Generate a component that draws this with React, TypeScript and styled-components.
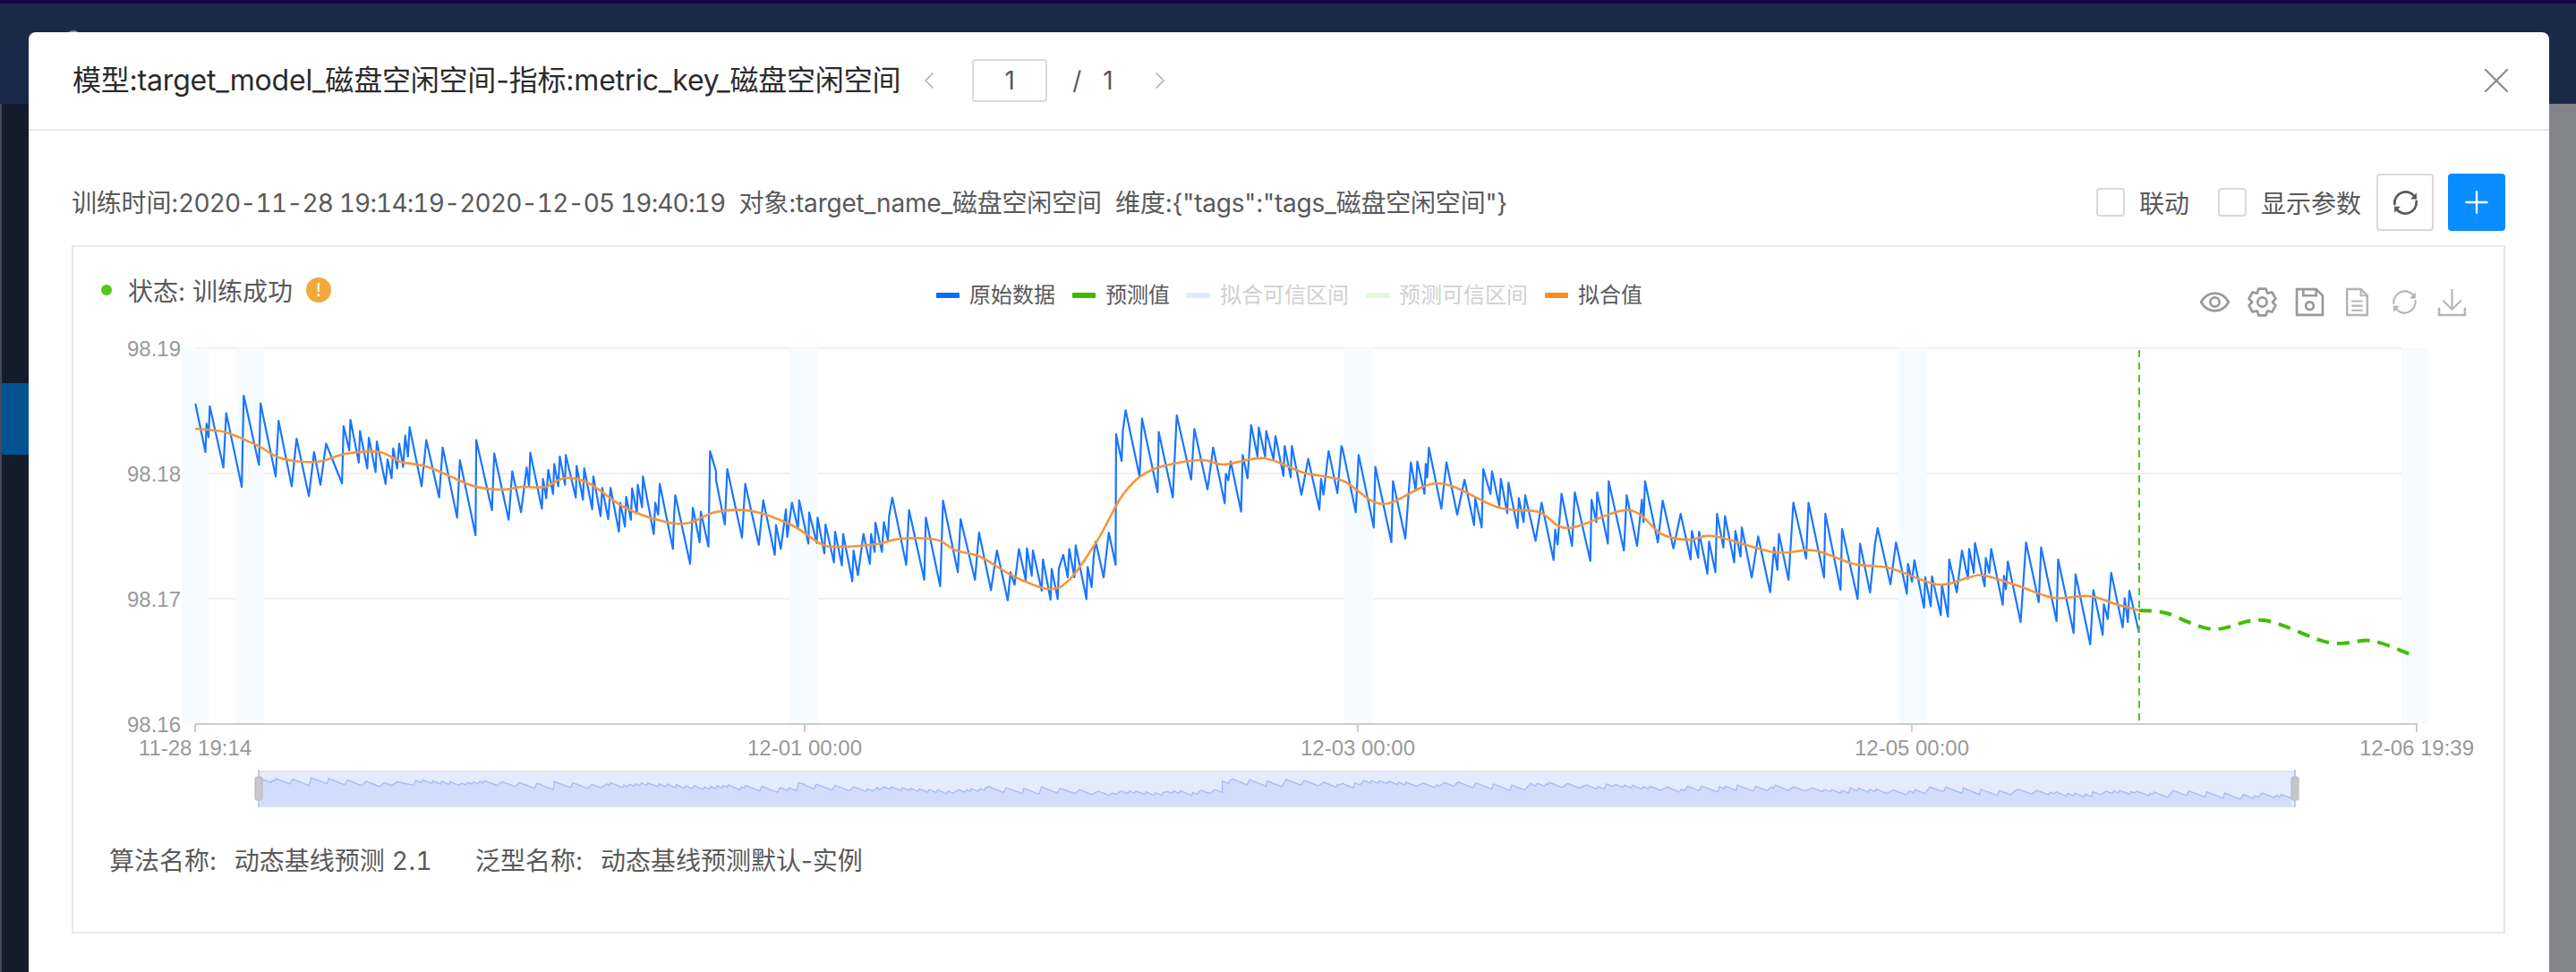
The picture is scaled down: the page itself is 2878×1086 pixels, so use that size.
import React from 'react';
import styled, { createGlobalStyle } from 'styled-components';
import { ChevronLeft, ChevronRight, Plus, X } from 'lucide-react';

const GlobalStyle = createGlobalStyle`
  html, body {
    margin: 0;
    padding: 0;
    width: 2878px;
    height: 1086px;
    overflow: hidden;
    background: #848589;
  }
  * { box-sizing: border-box; }
  body {
    font-family: Inter, "Noto Sans CJK SC", "Noto Sans", sans-serif;
  }
`;

type Pt = [number, number];

// vertices read off the reference crops, each crop has its own scale
const fromCrop = (ox: number, sx: number, flat: number[]): Pt[] => {
  const out: Pt[] = [];
  for (let i = 0; i < flat.length; i += 2) {
    out.push([ox + flat[i] / sx, 370 + flat[i + 1] / 3]);
  }
  return out;
};

const rawSeries: Pt[] = [
  ...fromCrop(100, 2.24, [
    265,243,290,405,293,310,298,355,301,252,335,457,342,275,381,522,386,216,424,448,428,242,466,487,473,300,506,520,
    518,360,549,553,562,405,578,515,592,377,632,510,636,318,650,400,653,297,674,440,677,335,695,460,699,357,716,472,
    719,370,741,512,746,430,756,493,760,393,770,460,775,377,785,455,790,350,797,420,801,322,831,520,843,365,875,557,
    884,390,920,625,927,432,966,684,968,365,1007,600,1013,410,1049,632,1058,470,1080,607,1094,457,1100,520,1103,407,
    1132,595,1135,495,1143,560,1148,465,1160,545,1163,445,1173,520,1177,420,1190,515,1192,415,1217,558,1219,452,
    1235,565,1238,460,1258,597,1261,487,1279,620,1283,525,1298,630,1304,525,1325,672,1328,575,1340,655,1343,555,
    1355,632,1358,527,1370,610,1372,515,1383,590,1385,487,1412,680,1416,575,1423,615,1427,512,1460,730,1463,620,
    1466,550,1503,780,1510,592,1527,708,1530,605,1549,722,1553,402,1568,470,
  ]),
  ...fromCrop(800, 2.24, [
    0,500,22,648,28,462,65,692,73,512,107,716,118,567,147,750,150,650,162,730,175,597,178,690,190,575,205,660,208,567,
    231,712,233,608,252,710,254,625,271,745,274,648,295,775,298,672,315,785,318,680,341,838,344,735,355,818,369,680,
    385,780,388,680,397,740,399,642,415,740,420,640,430,700,433,620,441,558,476,783,483,600,521,833,525,625,561,855,
    568,568,605,808,612,630,648,833,658,675,688,868,703,735,730,902,737,808,747,850,758,730,775,835,778,728,790,820,
    793,735,815,870,818,765,837,900,840,797,855,898,858,795,869,750,880,825,884,730,897,825,900,718,927,898,930,790,
    940,858,945,755,950,705,970,825,983,675,1000,783,1001,345,1015,435,1018,335,1025,265,1060,488,1066,293,1105,540,
    1108,338,1143,557,1153,282,1189,497,1197,328,1230,530,1244,390,1273,577,1276,478,1282,500,1288,437,1314,605,
    1318,415,1330,493,1339,315,1355,420,1358,323,1374,420,1377,335,1395,430,1400,352,1420,485,1423,385,1438,490,
    1441,385,1465,548,1482,428,1510,598,1514,495,1520,548,1533,402,1555,543,1565,385,
  ]),
  ...fromCrop(1500, 2.24, [
    0,395,33,607,40,415,78,658,82,455,122,707,126,503,157,695,171,440,183,535,187,437,205,545,208,445,212,490,216,390,
    247,595,260,440,287,615,305,498,329,650,332,560,348,658,352,462,370,545,374,470,392,585,396,495,412,610,415,508,
    438,660,441,560,453,640,457,550,483,703,498,575,528,767,532,665,538,715,548,545,574,720,581,540,620,770,623,565,
    635,640,637,540,664,712,666,503,704,735,711,550,737,720,749,565,753,640,757,503,789,708,801,568,828,728,846,612,
    871,765,874,670,890,760,892,672,913,813,917,705,933,808,937,612,953,725,957,620,980,775,983,670,996,755,999,658,
    1024,826,1040,688,1070,875,1080,725,1088,800,1092,680,1116,833,1128,575,1160,762,1166,575,1205,826,1208,612,
    1246,867,1250,663,1289,898,1295,712,1320,876,1332,718,1339,660,1371,848,1385,708,1412,880,1415,780,1425,840,
    1431,768,1455,927,1458,825,1472,922,1475,822,1497,952,1500,850,1515,957,1518,765,1537,875,1550,735,1565,830,
  ]),
  ...fromCrop(2200, 2.313, [
    0,730,12,810,15,710,40,855,43,760,52,810,57,730,87,917,90,820,95,865,100,772,133,975,147,708,180,908,186,725,
    226,972,230,765,270,1012,275,815,313,1050,321,868,345,1018,348,915,358,965,367,810,397,993,402,895,410,975,
    414,870,439,1010,
  ]),
];

const fitted: Pt[] = [
  [218,479],[252,483],[288,498],[314,512],[354,516],[386,507],[424,505],[448,516],[479,522],[529,543],[562,547],
  [582,544],[609,544],[631,534],[658,540],[698,567],[743,583],[770,584],[800,572],[840,571],[885,587],[916,607],
  [934,611],[979,608],[1005,602],[1046,603],[1068,615],[1095,622],[1139,647],[1184,656],[1224,607],[1255,552],
  [1287,525],[1340,514],[1367,519],[1412,512],[1456,528],[1500,537],[1545,563],[1607,540],[1674,567],[1719,572],
  [1752,590],[1819,570],[1857,597],[1888,603],[1915,599],[1982,617],[2027,615],[2071,630],[2112,635],[2165,653],
  [2200,645],[2217,643],[2256,655],[2295,668],[2334,666],[2364,675],[2390,682],
];

const forecast: Pt[] = [
  [2390,682],[2420,685],[2472,703],[2529,693],[2602,718],[2650,716],[2697,733],
];

const toPolyline = (pts: Pt[]) => pts.map(([x, y]) => `${x.toFixed(1)},${y.toFixed(1)}`).join(' ');

const toSmoothPath = (pts: Pt[]) => {
  let d = `M${pts[0][0]} ${pts[0][1]}`;
  for (let i = 0; i < pts.length - 1; i++) {
    const p0 = pts[Math.max(i - 1, 0)];
    const p1 = pts[i];
    const p2 = pts[i + 1];
    const p3 = pts[Math.min(i + 2, pts.length - 1)];
    const c1x = p1[0] + (p2[0] - p0[0]) / 6;
    const c1y = p1[1] + (p2[1] - p0[1]) / 6;
    const c2x = p2[0] - (p3[0] - p1[0]) / 6;
    const c2y = p2[1] - (p3[1] - p1[1]) / 6;
    d += ` C${c1x.toFixed(1)} ${c1y.toFixed(1)} ${c2x.toFixed(1)} ${c2y.toFixed(1)} ${p2[0]} ${p2[1]}`;
  }
  return d;
};

// same data squeezed into the data zoom slider
const miniSeries: Pt[] = rawSeries.map(([x, y]) => [
  291 + ((x - 218) / (2390 - 218)) * (2560 - 291),
  869 + (y - 442) * 0.086,
]);
const miniArea = `291,901 ${toPolyline(miniSeries)} 2560,901`;

const gearPath = (() => {
  const cx = 16;
  const cy = 16;
  const teeth = 6;
  const pts: string[] = [];
  for (let i = 0; i < teeth; i++) {
    const a = (i / teeth) * Math.PI * 2 - Math.PI / 2;
    const w = 0.27;
    const seq: [number, number][] = [
      [11.2, a - 0.52 + 0.02],
      [15, a - w],
      [15, a + w],
      [11.2, a + 0.5],
    ];
    seq.forEach(([r, t]) => {
      pts.push(`${(cx + r * Math.cos(t)).toFixed(2)} ${(cy + r * Math.sin(t)).toFixed(2)}`);
    });
  }
  return `M${pts.join(' L')} Z`;
})();

const bands: [number, number][] = [
  [203, 233],
  [264, 295],
  [882, 914],
  [1502, 1534],
  [2121, 2153],
  [2683, 2714],
];

const yTicks = [
  { label: '98.19', y: 389 },
  { label: '98.18', y: 529 },
  { label: '98.17', y: 669 },
  { label: '98.16', y: 809 },
];

const xTicks = [
  { label: '11-28 19:14', x: 218 },
  { label: '12-01 00:00', x: 899 },
  { label: '12-03 00:00', x: 1517 },
  { label: '12-05 00:00', x: 2136 },
  { label: '12-06 19:39', x: 2700 },
];

const legend = [
  { label: '原始数据', color: '#0a6cff', off: false },
  { label: '预测值', color: '#3cba00', off: false },
  { label: '拟合可信区间', color: '#dfeaff', off: true },
  { label: '预测可信区间', color: '#e5f6dc', off: true },
  { label: '拟合值', color: '#ff8c1a', off: false },
];

const Page = styled.div`
  position: relative;
  width: 2878px;
  height: 1086px;
  overflow: hidden;
  display: flex;
  flex-direction: column;
`;

const TopBar = styled.header`
  position: relative;
  height: 116px;
  flex: none;
  background: #1a2948;
  border-top: 4px solid #14084a;
`;

const Avatar = styled.span`
  position: absolute;
  left: 74px;
  top: 30px;
  width: 16px;
  height: 16px;
  border-radius: 50%;
  background: #8a8f9c;
`;

const Under = styled.div`
  flex: 1;
  display: flex;
`;

const Sidebar = styled.nav`
  width: 32px;
  flex: none;
  background: #141b2b;
  border-left: 2px solid #42485a;
  padding-top: 312px;
`;

const ActiveItem = styled.div`
  height: 80px;
  background: #04528f;
`;

const Main = styled.main`
  flex: 1;
  background: #848589;
`;

const Modal = styled.section`
  position: absolute;
  left: 32px;
  top: 36px;
  width: 2816px;
  height: 1050px;
  background: #fff;
  border-radius: 8px 8px 0 0;
  display: flex;
  flex-direction: column;
`;

const ModalHeader = styled.div`
  height: 110px;
  flex: none;
  display: flex;
  align-items: center;
  padding: 0 35px 0 49px;
  border-bottom: 2px solid #e8e8e8;
`;

const Title = styled.h2`
  margin: 0;
  font-size: 32px;
  line-height: 44px;
  font-weight: 400;
  letter-spacing: -0.2px;
  color: #2b2b2b;
  white-space: nowrap;
`;

const Pager = styled.div`
  display: flex;
  align-items: center;
  margin-left: 16px;
  color: #595959;
  font-size: 28px;
`;

const PageArrow = styled.span`
  display: flex;
  color: #b3b3b3;
`;

const PageInput = styled.div`
  width: 84px;
  height: 48px;
  margin: 0 28px 0 32px;
  border: 2px solid #d9d9d9;
  border-radius: 4px;
  display: flex;
  align-items: center;
  justify-content: center;
  color: #595959;
`;

const PageTotal = styled.span`
  display: flex;
  gap: 24px;
  margin-right: 36px;
`;

const CloseButton = styled.button`
  margin-left: auto;
  padding: 0;
  border: 0;
  background: none;
  color: #8c8c8c;
  display: flex;
`;

const ModalBody = styled.div`
  flex: 1;
  padding: 48px 49px 0 48px;
  display: flex;
  flex-direction: column;
`;

const InfoRow = styled.div`
  height: 64px;
  flex: none;
  margin-bottom: 16px;
  display: flex;
  align-items: center;
  justify-content: space-between;
`;

const InfoText = styled.div`
  font-size: 28px;
  line-height: 40px;
  padding-top: 2px;
  letter-spacing: -0.2px;
  color: #595959;
  white-space: pre;
`;

const Numeric = styled.span`
  font-variant-numeric: tabular-nums;
  letter-spacing: -0.85px;
`;

const Controls = styled.div`
  display: flex;
  align-items: center;
  gap: 16px;
`;

const CheckItem = styled.label<{ $last?: boolean }>`
  display: flex;
  align-items: center;
  gap: 16px;
  margin-right: ${p => (p.$last ? 1 : 16)}px;
  font-size: 28px;
  color: #595959;
`;

const CheckBox = styled.span`
  width: 32px;
  height: 32px;
  border: 2px solid #d9d9d9;
  border-radius: 4px;
  background: #fff;
`;

const IconButton = styled.button<{ $primary?: boolean }>`
  width: 64px;
  height: 64px;
  padding: 0;
  border-radius: 4px;
  display: flex;
  align-items: center;
  justify-content: center;
  border: 2px solid ${p => (p.$primary ? '#0a8dff' : '#d9d9d9')};
  background: ${p => (p.$primary ? '#0a8dff' : '#fff')};
  color: ${p => (p.$primary ? '#fff' : '#595959')};
`;

const Card = styled.div`
  height: 769px;
  flex: none;
  border: 2px solid #e8e8e8;
  display: flex;
  flex-direction: column;
`;

const CardHead = styled.div`
  height: 96px;
  flex: none;
  display: grid;
  grid-template-columns: 964px 1fr auto;
`;

const Status = styled.div`
  display: flex;
  align-items: center;
  height: 32px;
  margin-top: 32px;
  padding-left: 31px;
  font-size: 28px;
  color: #595959;
`;

const StatusDot = styled.span`
  width: 12px;
  height: 12px;
  border-radius: 50%;
  background: #52c41a;
  margin-right: 18px;
`;

const WarnBadge = styled.span`
  width: 28px;
  height: 28px;
  margin-left: 15px;
  border-radius: 50%;
  background: #f0a93b;
  color: #fff;
  font-size: 20px;
  line-height: 28px;
  text-align: center;
`;

const Legend = styled.div`
  display: flex;
  align-items: center;
  gap: 19px;
  height: 34px;
  margin-top: 37px;
`;

const LegendItem = styled.span<{ $off?: boolean }>`
  display: flex;
  align-items: center;
  gap: 11px;
  font-size: 24px;
  line-height: 34px;
  color: ${p => (p.$off ? '#d0d0d0' : '#595959')};
`;

const LegendMark = styled.i<{ $color: string }>`
  width: 26px;
  height: 6px;
  border-radius: 1px;
  background: ${p => p.$color};
`;

const Toolbox = styled.div`
  display: flex;
  align-items: center;
  gap: 20px;
  margin-top: 44px;
  height: 34px;
  padding-right: 41px;
`;

const ToolIcon = styled.svg<{ $tone?: 'dark' | 'light' }>`
  width: 33px;
  height: 33px;
  fill: none;
  stroke: ${p => (p.$tone === 'dark' ? '#595959' : p.$tone === 'light' ? '#b4b4b4' : '#999')};
  stroke-width: ${p => (p.$tone === 'light' ? 2 : 2.6)};
`;

const ChartSvg = styled.svg`
  display: block;
  width: 2715px;
  height: 533px;
  flex: none;
`;

const AxisLabel = styled.text`
  font-family: "Liberation Sans", Arial, sans-serif;
  font-size: 24px;
  fill: #999;
`;

const Footer = styled.div`
  margin-top: 37px;
  padding-left: 40px;
  display: flex;
  gap: 48px;
  font-size: 28px;
  line-height: 40px;
  color: #595959;
  white-space: pre;
`;

const FooterLabel = styled.span`
  margin-right: 4px;
`;

const FooterNumber = styled(Numeric)`
  letter-spacing: 0.5px;
`;

const RefreshGlyph: React.FC<{ light?: boolean }> = ({ light }) => (
  <>
    <path d="M4.2 17.5A12 12 0 0 1 26.6 10.4" strokeLinecap="round" />
    <path d="M27.8 14.5A12 12 0 0 1 5.4 21.6" strokeLinecap="round" />
    <path d="M28 5.2V12H21.4Z" fill={light ? '#b4b4b4' : '#595959'} stroke="none" />
    <path d="M4 26.8V20H10.6Z" fill={light ? '#b4b4b4' : '#595959'} stroke="none" />
  </>
);

const Chart: React.FC = () => (
  <ChartSvg viewBox="82 372 2715 533">
    {yTicks.slice(0, 3).map(t => (
      <line key={t.y} x1={218} x2={2683} y1={t.y} y2={t.y} stroke="#f0f0f0" strokeWidth={2} />
    ))}
    {bands.map(([a, b]) => (
      <rect key={a} x={a} y={389} width={b - a} height={419} fill="#f5fbff" />
    ))}
    <line x1={218} x2={2701} y1={809} y2={809} stroke="#cccccc" strokeWidth={2} />
    {xTicks.map(t => (
      <line key={t.x} x1={t.x} x2={t.x} y1={809} y2={818} stroke="#cccccc" strokeWidth={2} />
    ))}
    {yTicks.map(t => (
      <AxisLabel key={t.label} x={202} y={t.y + 9} textAnchor="end">
        {t.label}
      </AxisLabel>
    ))}
    {xTicks.map(t => (
      <AxisLabel key={t.label} x={t.x} y={844} textAnchor="middle">
        {t.label}
      </AxisLabel>
    ))}
    <polyline points={toPolyline(rawSeries)} fill="none" stroke="#1a76ff" strokeWidth={2.2} strokeLinejoin="round" />
    <path d={toSmoothPath(fitted)} fill="none" stroke="#f6953a" strokeWidth={2.6} />
    <line x1={2390} x2={2390} y1={391} y2={808} stroke="#52c41a" strokeWidth={2} strokeDasharray="8 6" />
    <path d={toSmoothPath(forecast)} fill="none" stroke="#3fbf00" strokeWidth={4} strokeDasharray="14 9" />

    <rect x={289} y={862} width={2275} height={39} fill="#e4ebfd" />
    <polygon points={miniArea} fill="#d2ddfb" />
    <polyline points={toPolyline(miniSeries)} fill="none" stroke="#a7bdf5" strokeWidth={1.4} />
    <line x1={289} x2={2564} y1={862} y2={862} stroke="#e0e3ea" strokeWidth={2} />
    <line x1={289} x2={2564} y1={901} y2={901} stroke="#e0e3ea" strokeWidth={2} />
    <line x1={289} x2={289} y1={860} y2={902} stroke="#a9bce8" strokeWidth={1.5} />
    <line x1={2564} x2={2564} y1={860} y2={902} stroke="#a9bce8" strokeWidth={1.5} />
    <rect x={285} y={868} width={8} height={26} rx={2} fill="#c6c7cb" stroke="#b5b6ba" />
    <rect x={2560} y={868} width={8} height={26} rx={2} fill="#c6c7cb" stroke="#b5b6ba" />
  </ChartSvg>
);

export default function App() {
  return (
    <Page>
      <GlobalStyle />
      <TopBar>
        <Avatar />
      </TopBar>
      <Under>
        <Sidebar>
          <ActiveItem />
        </Sidebar>
        <Main />
      </Under>

      <Modal>
        <ModalHeader>
          <Title>模型:target_model_磁盘空闲空间-指标:metric_key_磁盘空闲空间</Title>
          <Pager>
            <PageArrow>
              <ChevronLeft size={32} strokeWidth={1.3} />
            </PageArrow>
            <PageInput>1</PageInput>
            <PageTotal>
              <span>/</span>
              <span>1</span>
            </PageTotal>
            <PageArrow>
              <ChevronRight size={32} strokeWidth={1.3} />
            </PageArrow>
          </Pager>
          <CloseButton>
            <X size={48} strokeWidth={1.1} />
          </CloseButton>
        </ModalHeader>

        <ModalBody>
          <InfoRow>
            <InfoText>
              训练时间:<Numeric>2020-11-28 19:14:19-2020-12-05 19:40:19</Numeric>  对象:target_name_磁盘空闲空间  维度:{'{"tags":"tags_磁盘空闲空间"}'}
            </InfoText>
            <Controls>
              <CheckItem>
                <CheckBox />
                联动
              </CheckItem>
              <CheckItem $last>
                <CheckBox />
                显示参数
              </CheckItem>
              <IconButton>
                <ToolIcon viewBox="0 0 32 32" $tone="dark">
                  <RefreshGlyph />
                </ToolIcon>
              </IconButton>
              <IconButton $primary>
                <Plus size={40} strokeWidth={1.4} />
              </IconButton>
            </Controls>
          </InfoRow>

          <Card>
            <CardHead>
              <Status>
                <StatusDot />
                状态: 训练成功
                <WarnBadge>!</WarnBadge>
              </Status>
              <Legend>
                {legend.map(item => (
                  <LegendItem key={item.label} $off={item.off}>
                    <LegendMark $color={item.color} />
                    {item.label}
                  </LegendItem>
                ))}
              </Legend>
              <Toolbox>
                <ToolIcon viewBox="0 0 32 32">
                  <path d="M1 16C5 9.5 10 6.5 16 6.5S27 9.5 31 16C27 22.5 22 25.5 16 25.5S5 22.5 1 16Z" />
                  <circle cx="16" cy="16" r="5" />
                </ToolIcon>
                <ToolIcon viewBox="0 0 32 32">
                  <path d={gearPath} strokeLinejoin="round" />
                  <circle cx="16" cy="16" r="5" />
                </ToolIcon>
                <ToolIcon viewBox="0 0 32 32">
                  <path d="M2 2H23L30 9V30H2Z" />
                  <path d="M9 2V9H23V2" />
                  <circle cx="16" cy="20" r="4.2" />
                </ToolIcon>
                <ToolIcon viewBox="0 0 32 32" $tone="light">
                  <path d="M5 2H20L27 9V30H5Z" strokeWidth={2.4} />
                  <path d="M20 2V9H27" />
                  <path d="M10 15H22M10 20H22M10 25H22" />
                </ToolIcon>
                <ToolIcon viewBox="0 0 32 32" $tone="light">
                  <RefreshGlyph light />
                </ToolIcon>
                <ToolIcon viewBox="0 0 32 32" $tone="light">
                  <path d="M16 2V23M6 14L16 24L26 14" />
                  <path d="M2 22V30H30V22" strokeWidth={2.4} />
                </ToolIcon>
              </Toolbox>
            </CardHead>
            <Chart />
            <Footer>
              <span>
                <FooterLabel>算法名称:  </FooterLabel>动态基线预测 <FooterNumber>2.1</FooterNumber>
              </span>
              <span>
                <FooterLabel>泛型名称:  </FooterLabel>动态基线预测默认-实例
              </span>
            </Footer>
          </Card>
        </ModalBody>
      </Modal>
    </Page>
  );
}
